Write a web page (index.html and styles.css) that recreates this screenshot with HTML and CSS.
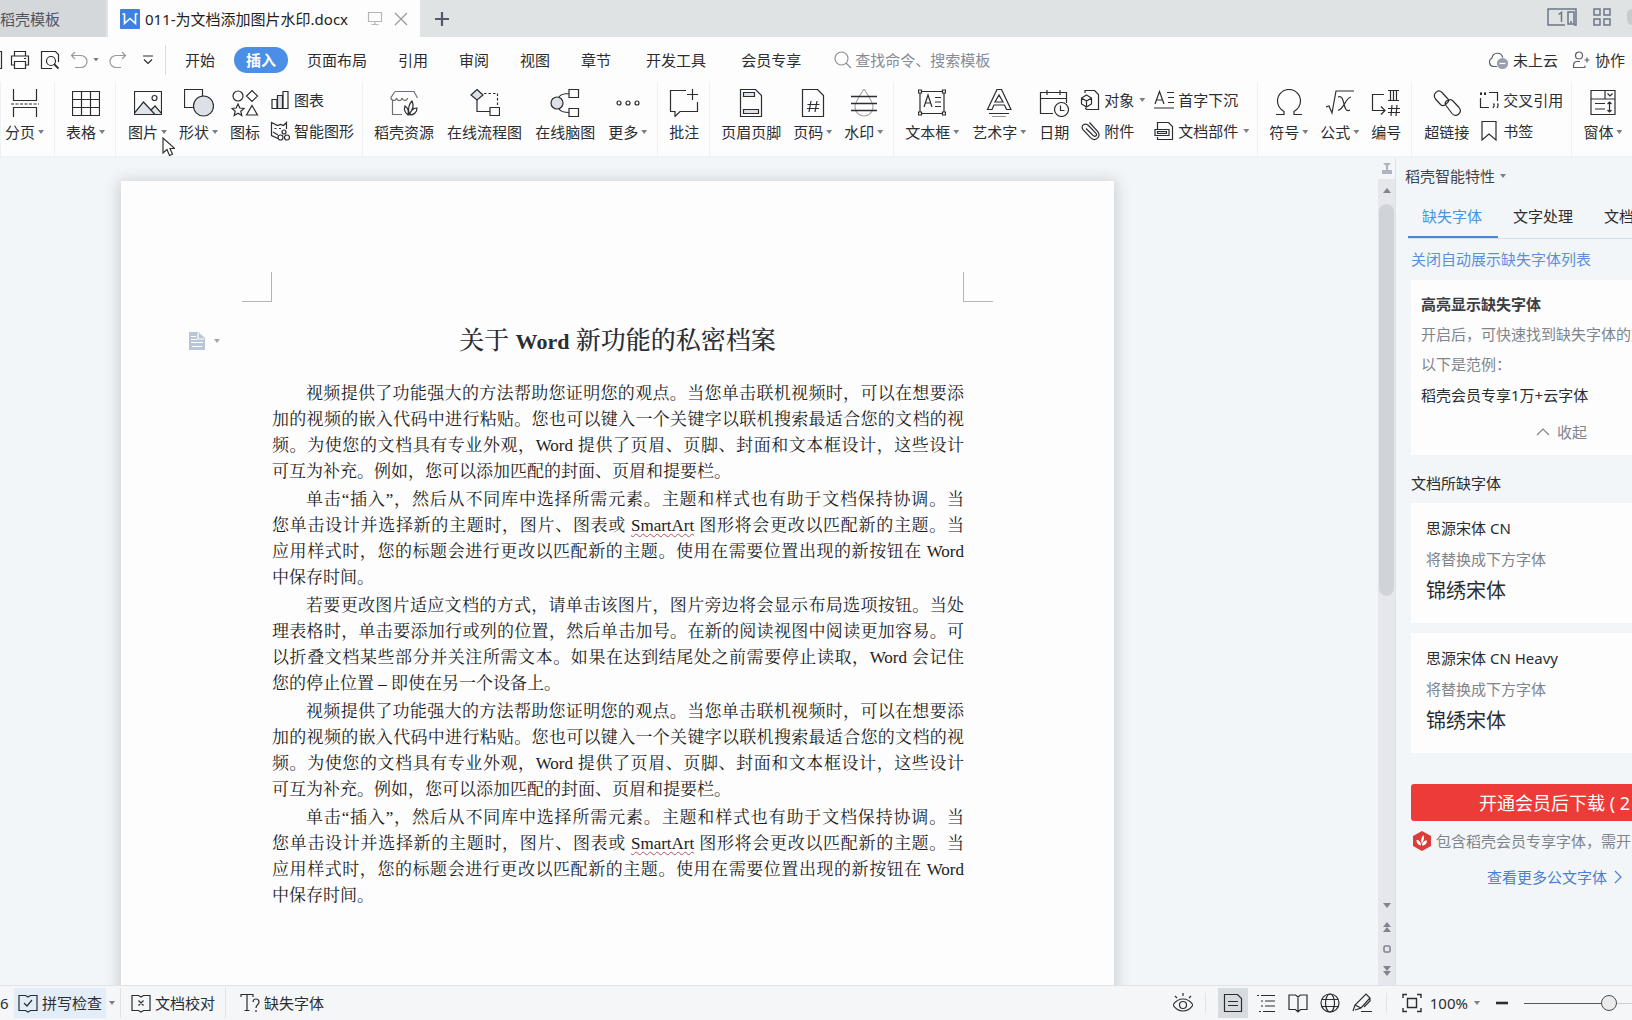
FILE: index.html
```html
<!DOCTYPE html>
<html lang="zh-CN">
<head>
<meta charset="utf-8">
<title>011-为文档添加图片水印.docx</title>
<meta name="viewport" content="width=device-width, initial-scale=1">
<link rel="stylesheet" href="styles.css">
</head>
<body>
<header class="titlebar">
  <button class="tab">稻壳模板</button>
  <div class="tab tab-active">
    <svg class="logo" viewBox="0 0 20 20"><rect width="20" height="20" rx="1" fill="#3d82e2" stroke="none"/><path d="M2.500 5h2v9.500l5.500-5 5.500 5V5h2" fill="none" stroke="#fff" stroke-width="1.600"/></svg>
    <span class="tab-name">011-为文档添加图片水印.docx</span>
    <button class="icon-btn pale" aria-label="投屏"><svg width="16" height="16" viewBox="0 0 16 16"><path d="M1.500 1.500h13v9h-13zM8 10.500v3M4.500 13.500h7"/></svg></button>
    <button class="icon-btn gray" aria-label="关闭"><svg width="14" height="14" viewBox="0 0 14 14"><path d="M1 1l12 12M13 1L1 13"/></svg></button>
  </div>
  <button class="icon-btn new-tab" aria-label="新建"><svg width="16" height="16" viewBox="0 0 16 16"><path d="M8 1v14M1 8h14" stroke-width="2.200"/></svg></button>
  <div class="window-tools">
    <button class="icon-btn slate" aria-label="窗口"><svg width="30" height="18" viewBox="0 0 30 18"><path d="M18 17H1V1h28v16h-2M11.500 6.500l3-2V14M21 4h6v12h-6zM23 14h2" stroke-width="1.500"/></svg></button>
    <button class="icon-btn slate" aria-label="应用"><svg width="18" height="18" viewBox="0 0 18 18"><path d="M1 1h6v6H1zM11 1h6v6h-6zM1 11h6v6H1zM11 11h6v6h-6z" stroke-width="1.500"/></svg></button>
    <span class="avatar"></span>
  </div>
</header>

<nav class="menubar">
  <div class="quick">
    <button class="icon-btn save" aria-label="保存"><svg width="3" height="20" viewBox="0 0 3 20"><path d="M0 1.500h1.500v17H0"/></svg></button>
    <button class="icon-btn" aria-label="打印"><svg width="20" height="20" viewBox="0 0 20 20"><path d="M4.500 6V1.500h11V6M4.500 15H1.500V6h17v9h-3M4.500 11.500h11v7h-11zM14 8.500h2"/></svg></button>
    <button class="icon-btn" aria-label="打印预览"><svg width="20" height="20" viewBox="0 0 20 20"><path d="M12 18.500H1.500v-17h14l3 3V12"/><circle cx="11" cy="11" r="4.500"/><path d="M14 14l4.500 4.500" stroke-width="1.800"/></svg></button>
    <button class="icon-btn gray undo" aria-label="撤销"><svg width="18" height="18" viewBox="0 0 18 18"><path d="M5 1L1.500 4.500 5 8M1.500 4.500H11a6 6 0 0 1 0 12H5"/></svg><i class="caret"></i></button>
    <button class="icon-btn gray" aria-label="恢复"><svg width="18" height="18" viewBox="0 0 18 18"><path d="M13 1l3.500 3.500L13 8M16.500 4.500H7a6 6 0 0 0 0 12h5"/></svg></button>
    <button class="icon-btn more" aria-label="自定义"><svg width="10" height="10" viewBox="0 0 10 10"><path d="M0 1h10M1 4.500l4 4 4-4"/></svg></button>
  </div>
  <div class="menus">
    <button class="menu">开始</button>
    <button class="menu menu-active">插入</button>
    <button class="menu">页面布局</button>
    <button class="menu">引用</button>
    <button class="menu">审阅</button>
    <button class="menu">视图</button>
    <button class="menu">章节</button>
    <button class="menu menu-wide">开发工具</button>
    <button class="menu menu-wide">会员专享</button>
  </div>
  <label class="search">
    <svg width="18" height="18" viewBox="0 0 18 18"><circle cx="7.500" cy="7.500" r="6.500"/><path d="M12 12l5 5"/></svg>
    <input type="text" placeholder="查找命令、搜索模板" aria-label="查找命令">
  </label>
  <div class="account">
    <button class="text-btn"><svg width="20" height="18" viewBox="0 0 20 18"><path d="M9 15.500H5.500A4.500 4.500 0 0 1 4 7a5.500 5.500 0 0 1 10.800-.5" stroke="#5b6068"/><circle cx="14.500" cy="12.500" r="5" fill="#9a9fab" stroke="#9a9fab"/><path d="M11.500 12.500h6" stroke="#fff"/></svg>未上云</button>
    <button class="text-btn"><svg width="18" height="18" viewBox="0 0 18 18"><circle cx="7" cy="4.500" r="3.500" stroke="#5b6068"/><path d="M13 16.500H1.500v-2.500a3.500 3.500 0 0 1 3.500-3.500h3M12.500 9h5M15 6.500v5M13 16.500v-2" stroke="#5b6068"/></svg>协作</button>
  </div>
</nav>

<section class="ribbon">
  <div class="group">
    <button class="tool"><svg viewBox="0 0 28 28"><path d="M2.500 0v11.500h23V0M2.500 28v-9.500h23V28"/><path d="M0 15h28" stroke-dasharray="3 1.500"/></svg><span>分页<i class="caret"></i></span></button>
  </div>
  <div class="group">
    <button class="tool"><svg viewBox="0 0 28 28"><path d="M.5 2.500h27v24H.500zM.500 10.500h27M.500 18.500h27M9.500 2.500v24M18.500 2.500v24"/></svg><span>表格<i class="caret"></i></span></button>
  </div>
  <div class="group has-stack">
    <button class="tool pointer-host"><svg viewBox="0 0 28 28"><path d="M1 25l9-11 6 7 4-3 7 8H1z" fill="#e1e4ea" stroke="none"/><path d="M.500 2.500h27v23H.500zM.500 24l9-11L21 25.500M17 21l4-4 6 7"/><circle cx="20.500" cy="9" r="2.500"/></svg><span>图片<i class="caret"></i></span>
      <svg class="pointer" viewBox="0 0 13 20"><path d="M1 1v15l4-3.500 2.500 6 3-1.300L8 11.500l4.500-.2z" fill="#fff"/></svg></button>
    <button class="tool"><svg class="wide" viewBox="0 0 30 28"><path d="M.500 .500h18v18H.500z"/><circle cx="19.500" cy="17" r="10" fill="#dde1e7"/></svg><span>形状<i class="caret"></i></span></button>
    <button class="tool"><svg viewBox="0 0 28 28"><circle cx="7" cy="7" r="5"/><path d="M21 1.500L26.500 7 21 12.500 15.500 7zM7 15l1.800 4 4.200.4-3.200 2.800 1 4.300L7 24.200l-3.800 2.300 1-4.300L1 19.400l4.200-.4zM21 16.500l5.500 9.500h-11z"/></svg><span>图标</span></button>
    <div class="stack">
      <button class="mini"><svg viewBox="0 0 20 20"><path d="M2 9.500h5v9H2zM13 1.500h5v17h-5z"/><path d="M7.500 5.500h5v13h-5z" fill="#dde1e7"/></svg>图表</button>
      <button class="mini"><svg viewBox="0 0 20 20"><path d="M8 17.500l-6.500-3v-13l6 3 3-1 3 1 3-3V8M4.500 7.500h2M9 7.500h2M3 11l5 3"/><circle cx="14" cy="11" r="2"/><circle cx="10.500" cy="16.500" r="2.500"/><circle cx="17" cy="16.500" r="2.500"/></svg>智能图形</button>
    </div>
  </div>
  <div class="group group-online">
    <button class="tool"><svg viewBox="0 0 28 28"><g stroke="#6d7177"><path d="M12 25.500H2.500V11M5 2.500h19l3.500 6.500M5 2.500L1 8.500c0 3.500 5 4 5.500.5 1 3.500 5 3.500 5.500 0 1 3.500 5 3 5.500 0"/></g><path d="M18 26c-4-3-4-6-3-9 3 2 4 5 3 9zM19 25c-1-5 0-10 3-13 2 4 1 9-3 13zM20 26c0-4 3-7 7-7 0 4-3 7-7 7z"/></svg><span>稻壳资源</span></button>
    <button class="tool"><svg class="wide" viewBox="0 0 30 28"><path d="M7 .500l6 5.500-6 5-6-5z" fill="#dde1e7"/><path d="M7 11v11.500h13M20 18.500h9.500v8H20z"/><path d="M14 4.500h13.500V17" stroke-dasharray="2.500 2"/></svg><span>在线流程图</span></button>
    <button class="tool"><svg class="wide" viewBox="0 0 30 28"><circle cx="7" cy="14" r="6" fill="#dde1e7"/><path d="M19 .500h9.500v8H19zM19 19.500h9.500v8H19zM9 8c2-3 5-3.500 10-3.500M9 20c2 3 5 3.500 10 3.500"/></svg><span>在线脑图</span></button>
    <button class="tool"><svg viewBox="0 0 28 28"><circle cx="5" cy="14" r="2"/><circle cx="14" cy="14" r="2"/><circle cx="23" cy="14" r="2"/></svg><span>更多<i class="caret"></i></span></button>
  </div>
  <div class="group">
    <button class="tool"><svg class="wide" viewBox="0 0 30 28"><path d="M17 1.500H1.500v21h4.500v5l5-5h17.500V13M23.500 0v11M18 5.500h11"/></svg><span>批注</span></button>
  </div>
  <div class="group">
    <button class="tool"><svg viewBox="0 0 28 28"><path d="M3.500 .500h15l6 6v21h-21z"/><path d="M6.500 3.500h11v4h-11zM6.500 20.500h15v4h-15z" fill="#dde1e7"/></svg><span>页眉页脚</span></button>
    <button class="tool"><svg viewBox="0 0 28 28"><path d="M3.500 .500h15l6 6v21h-21zM12 12l-2 11M18 12l-2 11M8.500 15.500h12M8 19.500h12"/></svg><span>页码<i class="caret"></i></span></button>
    <button class="tool"><svg viewBox="0 0 28 28"><path d="M14 0C9 8 5 13 5 18a9 9 0 0 0 18 0C23 13 19 8 14 0z" stroke="#a4a7ac"/><path d="M1 7.500h26M1 14.500h26M1 21.500h26" stroke-width="1.500"/></svg><span>水印<i class="caret"></i></span></button>
  </div>
  <div class="group group-text has-stack">
    <button class="tool"><svg viewBox="0 0 28 28"><path d="M2 2.500h24v22H2zM6 18l4-12 4 12M7.500 14h5M17 8.500h6M17 13h6M17 17.500h6"/><path d="M.500 1h3v3h-3zM24.500 1h3v3h-3zM.500 23h3v3h-3zM24.500 23h3v3h-3z" fill="#fff"/></svg><span>文本框<i class="caret"></i></span></button>
    <button class="tool"><svg viewBox="0 0 28 28"><path d="M12 .500h4.500L26 20.500h-4.500L19.500 16H9l-2 4.500H2.500zM14 6l-4 7h8zM4 24.500h20M7 28h14"/></svg><span>艺术字<i class="caret"></i></span></button>
    <button class="tool"><svg class="wide" viewBox="0 0 30 28"><path d="M14 24.500H1.500v-21h26V14M1.500 9.500h26M8 1v5M21 1v5"/><circle cx="22.500" cy="20.500" r="7"/><path d="M21.500 16.500v5h4"/></svg><span>日期</span></button>
    <div class="stack">
      <button class="mini"><svg viewBox="0 0 20 20"><path d="M5 3V.500h9.500l4 4v15H7L5 18M6.500 5l5 3v6l-5 3-5-3V8zM1.500 8l5 3 5-3M6.500 11v6"/></svg>对象<i class="caret"></i></button>
      <button class="mini"><svg viewBox="0 0 20 20"><path d="M6 7.500l7.500 7.200c2 1.600 4-.6 2.500-2.300L8.500 4.500C5 1 0 5 3 8.700l7.500 8c4.500 4.500 11-.7 7.300-6L9.500 1.500"/></svg>附件</button>
    </div>
    <div class="stack">
      <button class="mini"><svg viewBox="0 0 20 20"><path d="M1 14L5.500 1.500 10 14M2.500 10h6M13 2.500h7M14 7.500h6M14 12.500h6M0 18h20"/></svg>首字下沉</button>
      <button class="mini"><svg viewBox="0 0 20 20"><path d="M3.500 8V1.500h11l4 4v13h-15V16M1 8.500h14v6H1z"/><path d="M3.500 10.500h9v2h-9z" fill="#dde1e7"/></svg>文档部件<i class="caret"></i></button>
    </div>
  </div>
  <div class="group">
    <button class="tool"><svg viewBox="0 0 28 28"><path d="M1 25.500h8v-3C5 20 2.500 16 2.500 12a11.500 11.500 0 0 1 23 0c0 4-2.500 8-6.500 10.500v3h8"/></svg><span>符号<i class="caret"></i></span></button>
    <button class="tool"><svg viewBox="0 0 28 28"><path d="M0 18l3-1 3 7 4-22h18M12 8c4-2 5 3 6 7s2 8 6 6M25 8c-5 0-8 14-13 13"/></svg><span>公式<i class="caret"></i></span></button>
    <button class="tool"><svg class="wide" viewBox="0 0 30 28"><path d="M13 5.500H1.500v16H14M10 17.500l4 4-4 4M17 1.500h11M17 11.500h11M19.500 1.500v10M22.500 1.500v10M25.500 1.500v10M21 16l-1 11M26 16l-1 11M17 19.500h12M17 23.500h12"/></svg><span>编号</span></button>
  </div>
  <div class="group has-stack">
    <button class="tool"><svg viewBox="0 0 28 28"><path d="M12 16l3-3c1-1 1-2 0-3L9 3.500C5-.5-1 5 2.500 10l5 5.500c1.500 1.500 3.500 1 4.500.5M16 11c-3 0-5 3-3 5.500l6 8c4 5 11-1 7-6l-6-6.500c-1-1-3-1.500-4-1"/></svg><span>超链接</span></button>
    <div class="stack">
      <button class="mini"><svg viewBox="0 0 20 20"><path d="M1.500 8v9.500H10M10 2.500h8.500V11M2 2v3M6 2v3M14 14h1v2l-1 2M18 14h1v2l-1 2"/><path d="M1 4h2M5 4h2" stroke-width="2"/></svg>交叉引用</button>
      <button class="mini"><svg viewBox="0 0 20 20"><path d="M3 .500h14v18.500l-7-6-7 6z"/></svg>书签</button>
    </div>
  </div>
  <div class="group">
    <button class="tool"><svg viewBox="0 0 28 28"><path d="M2 1.500h24v24H2zM2 10h24M16 1.500V10M18.500 4.500L21 7l2.500-2.500M6 14.500h10M6 20h10M20.500 13v10M18.500 15l2-2 2 2M18.500 21l2 2 2-2"/></svg><span>窗体<i class="caret"></i></span></button>
  </div>
</section>

<main class="workspace">
  <div class="canvas">
    <article class="page">
      <div class="corners"><span class="corner corner-left"></span><span class="corner corner-right"></span></div>
      <div class="title-row">
        <button class="para-tool" aria-label="段落布局"><svg width="16" height="18" viewBox="0 0 16 18"><path d="M0 0h9l7 6v12H0z" fill="#b9c6d8" stroke="none"/><path d="M2 4.500h5M2 7.500h6M2 10.500h12M3 14.500h10M9 1v6h6" stroke="#fff"/></svg><i class="caret"></i></button>
        <h1>关于 <b>Word</b> 新功能的私密档案</h1>
      </div>
      <div class="prose">
        <p><span>视频提供了功能强大的方法帮助您证明您的观点。当您单击联机视频时，可以在想要添</span><span>加的视频的嵌入代码中进行粘贴。您也可以键入一个关键字以联机搜索最适合您的文档的视</span><span>频。为使您的文档具有专业外观，Word 提供了页眉、页脚、封面和文本框设计，这些设计</span><span>可互为补充。例如，您可以添加匹配的封面、页眉和提要栏。</span></p>
        <p><span>单击“插入”，然后从不同库中选择所需元素。主题和样式也有助于文档保持协调。当</span><span>您单击设计并选择新的主题时，图片、图表或 <u>SmartArt</u> 图形将会更改以匹配新的主题。当</span><span>应用样式时，您的标题会进行更改以匹配新的主题。使用在需要位置出现的新按钮在 Word</span><span>中保存时间。</span></p>
        <p><span>若要更改图片适应文档的方式，请单击该图片，图片旁边将会显示布局选项按钮。当处</span><span>理表格时，单击要添加行或列的位置，然后单击加号。在新的阅读视图中阅读更加容易。可</span><span>以折叠文档某些部分并关注所需文本。如果在达到结尾处之前需要停止读取，Word 会记住</span><span>您的停止位置 – 即使在另一个设备上。</span></p>
        <p><span>视频提供了功能强大的方法帮助您证明您的观点。当您单击联机视频时，可以在想要添</span><span>加的视频的嵌入代码中进行粘贴。您也可以键入一个关键字以联机搜索最适合您的文档的视</span><span>频。为使您的文档具有专业外观，Word 提供了页眉、页脚、封面和文本框设计，这些设计</span><span>可互为补充。例如，您可以添加匹配的封面、页眉和提要栏。</span></p>
        <p><span>单击“插入”，然后从不同库中选择所需元素。主题和样式也有助于文档保持协调。当</span><span>您单击设计并选择新的主题时，图片、图表或 <u>SmartArt</u> 图形将会更改以匹配新的主题。当</span><span>应用样式时，您的标题会进行更改以匹配新的主题。使用在需要位置出现的新按钮在 Word</span><span>中保存时间。</span></p>
      </div>
    </article>
  </div>

  <div class="scrollbar">
    <button class="ruler-btn" aria-label="标尺"><svg width="12" height="12" viewBox="0 0 12 12"><path d="M2 0h8L6 4zM1 7h10v4H1z" fill="#b0b3bd" stroke="none"/><path d="M6 3v5" stroke="#b0b3bd" stroke-width="2"/></svg></button>
    <div class="track">
      <button class="scroll-btn" aria-label="向上滚动"><svg width="8" height="5" viewBox="0 0 8 5"><path d="M0 5l4-5 4 5z"/></svg></button>
      <div class="thumb-area"><div class="thumb"></div></div>
      <button class="scroll-btn" aria-label="向下滚动"><svg width="8" height="5" viewBox="0 0 8 5"><path d="M0 0l4 5 4-5z"/></svg></button>
      <button class="scroll-btn" aria-label="上一页"><svg width="8" height="10" viewBox="0 0 8 10"><path d="M0 5l4-5 4 5zM0 10l4-5 4 5z"/></svg></button>
      <button class="scroll-btn" aria-label="选择浏览对象"><svg width="8" height="8" viewBox="0 0 8 8"><rect x="1" y="1" width="6" height="6" rx="1" class="hollow"/></svg></button>
      <button class="scroll-btn" aria-label="下一页"><svg width="8" height="10" viewBox="0 0 8 10"><path d="M0 0l4 5 4-5zM0 5l4 5 4-5z"/></svg></button>
    </div>
  </div>

  <aside class="panel">
    <button class="panel-title">稻壳智能特性<i class="caret"></i></button>
    <div class="panel-tabs">
      <button class="panel-tab panel-tab-active">缺失字体</button>
      <button class="panel-tab">文字处理</button>
      <button class="panel-tab">文档</button>
    </div>
    <a class="link" href="#">关闭自动展示缺失字体列表</a>
    <section class="card tips">
      <h2>高亮显示缺失字体</h2>
      <p class="muted">开启后，可快速找到缺失字体的文</p>
      <p class="muted">以下是范例：</p>
      <p class="offer">稻壳会员专享1万+云字体</p>
      <button class="collapse"><svg width="14" height="8" viewBox="0 0 14 8"><path d="M1 7l6-6 6 6"/></svg>收起</button>
    </section>
    <h3>文档所缺字体</h3>
    <section class="card font-card">
      <p>思源宋体 CN</p>
      <p class="muted">将替换成下方字体</p>
      <p class="sample">锦绣宋体</p>
    </section>
    <section class="card font-card">
      <p>思源宋体 CN Heavy</p>
      <p class="muted">将替换成下方字体</p>
      <p class="sample">锦绣宋体</p>
    </section>
    <button class="download">开通会员后下载 ( 2</button>
    <p class="member"><svg width="20" height="20" viewBox="0 0 20 20"><path d="M10 0l9 5v10l-9 5-9-5V5z" fill="#dc3d3b" stroke="none"/><path d="M9 14.500C5 13.500 4.500 11 4.500 9c2.500 0 4.500 2 4.500 5.500zM9.500 12.500c-1-3.500 0-6.500 2-8.500 1 3 .5 6-2 8.500zM10 14.500c0-3 2-5 5-5 0 3-2 5-5 5z" fill="#fff" stroke="none"/></svg>包含稻壳会员专享字体，需开</p>
    <a class="link more-fonts" href="#">查看更多公文字体<svg width="8" height="14" viewBox="0 0 8 14"><path d="M1 1l6 6-6 6"/></svg></a>
  </aside>
</main>

<footer class="statusbar">
  <span class="count">6</span>
  <button class="status-item spell"><svg width="20" height="20" viewBox="0 0 20 20"><path d="M1 2.500h6.500L10 4l2.500-1.500H19v15h-6.500L10 19l-2.500-1.500H1zM6 10l3 3 5-6"/></svg>拼写检查</button>
  <button class="spell-menu" aria-label="拼写检查选项"><i class="caret"></i></button>
  <button class="status-item"><svg width="20" height="20" viewBox="0 0 20 20"><path d="M1 2.500h6.500L10 4l2.500-1.500H19v15h-6.500L10 19l-2.500-1.500H1zM7.500 7.500l5 5M12.500 7.500l-5 5"/></svg>文档校对</button>
  <button class="status-item missing"><svg width="20" height="20" viewBox="0 0 20 20"><path d="M1 4V1.500h12V4M7 1.500v16M4.500 17.500h5M13 9c0-4 6-4 6 0 0 3-3 2.500-3 6M16 17v2"/></svg>缺失字体</button>
  <div class="views">
    <button class="icon-btn" aria-label="护眼模式"><svg width="20" height="20" viewBox="0 0 20 20"><path d="M0 12c5-8 15-8 20 0-5 8-15 8-20 0zM10 0v3M2 3l2 2M18 3l-2 2"/><circle cx="10" cy="12" r="3.500"/></svg></button>
    <span class="divider"></span>
    <button class="icon-btn view-active" aria-label="页面视图"><svg width="20" height="20" viewBox="0 0 20 20"><path d="M1.500 1.500h13l4 4v13h-17zM5 8.500h10M5 12.500h10"/></svg></button>
    <button class="icon-btn" aria-label="大纲"><svg width="20" height="20" viewBox="0 0 20 20"><path d="M1 2.500h2M5 2.500h14M5 8h2M9 8h10M5 13h2M9 13h10M3 18.500h2M7 18.500h12"/></svg></button>
    <button class="icon-btn" aria-label="阅读版式"><svg width="20" height="20" viewBox="0 0 20 20"><path d="M1 2h6.500L10 4l2.500-2H19v14.500h-6.500L10 19l-2.500-2.500H1zM10 4v14"/></svg></button>
    <button class="icon-btn" aria-label="网页版式"><svg width="20" height="20" viewBox="0 0 20 20"><circle cx="10" cy="10" r="9"/><ellipse cx="10" cy="10" rx="4.500" ry="9"/><path d="M2 6.500h16M2 13.500h16"/></svg></button>
    <button class="icon-btn" aria-label="写作模式"><svg width="20" height="20" viewBox="0 0 20 20"><path d="M1 18l2-6L14 1l4 4-9 10-6 2M3 12l6 3M18 5v3l-6 6M9 18.500h11"/></svg></button>
    <span class="divider divider-wide"></span>
    <button class="icon-btn" aria-label="最佳显示比例"><svg width="20" height="20" viewBox="0 0 20 20"><path d="M1 5V1.500h4M15 1.500h4V5M19 15v3.500h-4M5 18.500H1V15M5.500 5.500h9v9h-9z" stroke-width="1.400"/></svg></button>
    <button class="zoom">100%<i class="caret"></i></button>
    <button class="icon-btn minus" aria-label="缩小"><svg width="12" height="4" viewBox="0 0 12 4"><path d="M0 2h12" stroke-width="2.600"/></svg></button>
    <div class="slider-clip"><input class="slider" type="range" min="0" max="200" value="100" aria-label="显示比例"></div>
  </div>
</footer>
</body>
</html>
```
FILE: styles.css
```css
* { box-sizing: border-box; }

body {
  margin: 0;
  height: 100vh;
  display: grid;
  grid-template-rows: 37px 45px 76px minmax(0, 1fr) 35px;
  grid-template-columns: minmax(0, 1fr);
  overflow: hidden;
  background: #fdfdfd;
  color: #2b2d31;
  font: 15px/20px "Noto Sans", "Noto Sans CJK SC", sans-serif;
}

button {
  padding: 0;
  border: 0;
  background: none;
  color: inherit;
  font: inherit;
  white-space: nowrap;
}

h1, h2, h3, p { margin: 0; }

svg {
  display: block;
  flex: none;
  fill: none;
  stroke: currentColor;
  stroke-width: 1.2;
}

.caret {
  display: inline-block;
  flex: none;
  width: 6px;
  height: 4px;
  margin-left: 3px;
  background: #7b7f88;
  clip-path: polygon(0 0, 100% 0, 50% 100%);
}

.icon-btn { display: flex; align-items: center; flex: none; }
.gray { color: #96999f; }
.pale { color: #b3b6bb; }
.slate { color: #6d7687; }

/* Title bar */
.titlebar { display: flex; background: #dfe3e4; }
.tab {
  width: 106px;
  padding-right: 46px;
  margin-right: 2px;
  background: #d5d8db;
  color: #50545f;
}
.tab-active {
  display: flex;
  align-items: center;
  gap: 5px;
  width: 312px;
  padding: 0 12px;
  margin: 0;
  background: #fdfdfd;
  color: #222;
}
.logo { width: 20px; height: 20px; }
.tab-name { flex: 1; white-space: nowrap; }
.tab-active .gray { margin-left: 6px; }
.new-tab { margin-left: 14px; color: #535870; }
.window-tools { display: flex; align-items: center; gap: 16px; margin: 0 0 3px auto; }
.avatar { width: 5px; height: 16px; border-radius: 8px 0 0 8px; background: #c9cccf; }

/* Menu row */
.menubar { display: flex; align-items: center; }
.quick {
  display: flex;
  align-items: center;
  gap: 10px;
  height: 30px;
  width: 166px;
  border-right: 1px solid #dcdee1;
}
.save { margin-right: -3px; }
.undo .caret { margin-left: 5px; }
.more { margin-left: 6px; }
.menus { display: flex; gap: 7px; margin-left: 7px; }
.menu { height: 26px; padding: 0 12px; border-radius: 13px; }
.menu-active { background: #4a8ee6; color: #fff; font-weight: 700; }
.menu-wide { margin-left: 4px; }
.search { display: flex; align-items: center; gap: 3px; margin-left: 21px; color: #8d9299; }
.search input { width: 160px; padding: 0; border: 0; background: none; color: inherit; font: inherit; }
.search input::placeholder { color: #858c96; opacity: 1; }
.account { display: flex; gap: 14px; margin-left: auto; padding-right: 7px; }
.text-btn { display: flex; align-items: center; gap: 5px; }

/* Ribbon */
.ribbon { display: flex; border-bottom: 2px solid #f1f2f4; }
.group {
  display: flex;
  flex: none;
  gap: 12px;
  padding: 0 10px 0 11px;
  border-left: 1px solid #eff0f2;
}
.group:first-child { padding-left: 4px; }
.has-stack { padding-left: 12px; }
.group-online { gap: 13px; }
.group-text { gap: 13px; padding-left: 11px; }
.tool {
  display: flex;
  flex-direction: column;
  align-items: center;
  gap: 5px;
  padding-top: 7px;
}
.tool > svg { width: 28px; height: 28px; }
.tool > .wide { width: 30px; }
.tool span, .mini { display: flex; align-items: center; }
.stack { display: flex; flex-direction: column; gap: 11px; padding-top: 8px; margin: 0 -2px; }
.mini { gap: 4px; }
.mini svg { width: 20px; height: 20px; }
.mini .caret { margin-left: 1px; }
.pointer-host { position: relative; }
.tool > .pointer { position: absolute; left: 34px; top: 55px; width: 13px; height: 20px; z-index: 2; stroke: #333; }

/* Workspace */
.workspace {
  display: grid;
  grid-template-columns: minmax(0, 1fr) 18px 236px;
  grid-template-rows: minmax(0, 1fr);
  background: #f3f6f8;
}
.canvas { overflow: hidden; padding: 23px 0 0 121px; }
.page {
  width: 993px;
  min-height: 1300px;
  padding-top: 91px;
  background: #fdfdfd;
  box-shadow: 0 2px 14px 2px rgba(60, 60, 70, .22);
}
.corners { display: flex; justify-content: space-between; padding: 0 121px; }
.corner { width: 30px; height: 30px; border-bottom: 1px solid #b4b4b4; }
.corner-left { border-right: 1px solid #b4b4b4; }
.corner-right { border-left: 1px solid #b4b4b4; }

.title-row {
  display: grid;
  grid-template-columns: 150px 1fr 150px;
  align-items: center;
  margin: 22px 0 23px;
  font-family: "Liberation Serif", "Noto Serif CJK SC", "Noto Sans CJK SC", serif;
}
.title-row h1 { font-size: 25px; line-height: 34px; font-weight: 500; text-align: center; }
.title-row b { font-size: 22px; line-height: 20px; }
.para-tool { display: flex; align-items: center; gap: 6px; padding-left: 68px; }
.para-tool .caret { background: #a3a6ab; }

.prose {
  padding: 0 150px 0 151px;
  color: #1c1c1c;
  font: 17px/26px "Liberation Serif", "Noto Serif CJK SC", "Noto Sans CJK SC", serif;
}
.prose p { margin-bottom: 2px; }
.prose span { display: block; white-space: nowrap; text-align: justify; text-align-last: justify; }
.prose span:first-child { padding-left: 34px; }
.prose span:last-child { text-align-last: left; }
.prose u { text-decoration: underline wavy #b5525c 1px; text-underline-offset: 2px; text-decoration-skip-ink: none; }

/* Scroll bar */
.scrollbar { display: flex; flex-direction: column; border-right: 1px solid #dfe1e5; }
.ruler-btn { display: flex; justify-content: center; align-items: center; height: 21px; }
.track { display: flex; flex-direction: column; flex: 1; padding-bottom: 3px; background: #e6e7ec; }
.scroll-btn { display: flex; justify-content: center; align-items: center; height: 22px; }
.scroll-btn svg { fill: #80848f; stroke: none; }
.scroll-btn .hollow { fill: none; stroke: #80848f; stroke-width: 1.5; }
.thumb-area { flex: 1; padding: 3px 1px; }
.thumb { height: 57%; border-radius: 8px; background: #d0d4d8; }

/* Task pane */
.panel { overflow: hidden; padding-left: 12px; white-space: nowrap; }
.panel-title { display: flex; align-items: center; padding: 8px 0 10px; margin-left: -3px; color: #40444b; }
.panel-title .caret { margin-left: 5px; }
.panel-tabs { display: flex; border-bottom: 1px solid #d5dfec; }
.panel-tab { flex: none; height: 42px; padding: 0 16px 0 15px; border-bottom: 2px solid transparent; }
.panel-tab-active { padding-left: 14px; border-color: #4a87d9; color: #4a94e0; }
.link { color: #5c8fe0; text-decoration: none; }
.panel > .link { display: block; padding: 10px 0 11px 3px; }
.card { margin-left: 3px; background: #fdfdfd; }
.tips { height: 175px; padding: 14px 0 0 10px; }
.tips h2 { font-size: 15px; line-height: 20px; font-weight: 700; color: #3b3e44; }
.tips p { margin-top: 10px; }
.tips .offer { margin-top: 11px; }
.muted { color: #7f858c; }
.collapse { display: flex; align-items: center; gap: 7px; margin: 17px 0 0 115px; color: #7f858c; }
.panel h3 { padding: 18px 0 10px 3px; font-size: 15px; line-height: 20px; font-weight: 400; }
.font-card { height: 120px; padding: 15px 0 0 15px; margin-bottom: 10px; }
.font-card .muted { margin: 11px 0 10px; }
.font-card .sample { font-size: 20px; line-height: 24px; }
.download {
  display: block;
  width: 100%;
  height: 37px;
  margin: 31px 0 0 3px;
  padding-left: 68px;
  border-radius: 3px 0 0 3px;
  background: #ed3b38;
  color: #fff;
  font-size: 18px;
  text-align: left;
}
.member { display: flex; gap: 4px; padding: 10px 0 6px 4px; color: #7f858c; }
.panel > .more-fonts { display: flex; align-items: center; gap: 7px; padding: 10px 0 0 79px; color: #4a7fd4; }

/* Status bar */
.statusbar {
  display: flex;
  align-items: center;
  border-top: 1px solid #dfe2e6;
  background: #f4f6f8;
}
.count { width: 14px; }
.status-item { display: flex; align-items: center; gap: 4px; height: 30px; padding: 0 10px; border-left: 1px solid #dfe2e6; }
.spell { padding: 0 4px; border: 0; background: #e3edf7; }
.spell-menu { display: flex; width: 14px; }
.missing { padding-left: 14px; }
.views { display: flex; align-items: center; gap: 12px; margin-left: auto; }
.divider { width: 1px; height: 20px; background: #dfe2e6; }
.divider-wide { margin: 0 3px 0 2px; }
.view-active { height: 30px; padding: 0 5px; background: #d7dce1; }
.view-active + .icon-btn { margin-left: -4px; }
.zoom { display: flex; align-items: center; gap: 3px; margin-left: -4px; }
.minus { margin-left: 4px; }
.slider-clip { width: 110px; overflow: hidden; margin-left: 2px; padding-left: 2px; }
.slider {
  display: block;
  appearance: none;
  width: 170px;
  height: 18px;
  margin: 0;
  background: linear-gradient(90deg, #55585f 50%, #ccd0d5 50%) center / 100% 1px no-repeat;
}
.slider::-webkit-slider-thumb {
  appearance: none;
  width: 16px;
  height: 16px;
  border: 1px solid #4a4d52;
  border-radius: 50%;
  background: #eceaea;
}
```
